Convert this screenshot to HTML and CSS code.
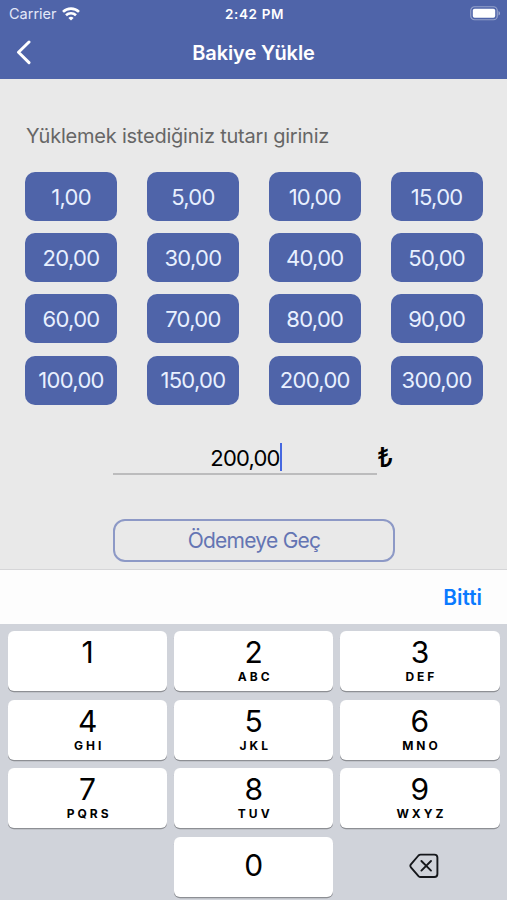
FILE: index.html
```html
<!DOCTYPE html>
<html lang="tr">
<head>
  <meta charset="UTF-8" />
  <meta name="viewport" content="width=device-width, initial-scale=1.0"/>
  <title>Bakiye Yükle</title>
  <link rel="stylesheet" href="styles.css">
</head>
<body>
  <header>
    <div class="status">
      <div class="carrier">
        <span>Carrier</span>
        <svg width="18" height="14" viewBox="0 0 18 14" fill="none" stroke="#fff" stroke-width="2.6">
          <path d="M1 4.9a11.4 11.4 0 0 1 16 0"/>
          <path d="M4 8.3a7.2 7.2 0 0 1 10 0"/>
          <path d="M9 13.6l-2.6-2.7a3.8 3.8 0 0 1 5.2 0z" fill="#fff" stroke="none"/>
        </svg>
      </div>
      <span class="time">2:42 PM</span>
      <svg class="battery" width="31" height="15" viewBox="0 0 31 15">
        <rect x="0.75" y="0.75" width="26.5" height="13" rx="3.8" fill="none" stroke="#fff" stroke-opacity="0.4" stroke-width="1.2"/>
        <rect x="2.8" y="2.8" width="22.4" height="9" rx="1.8" fill="#fff"/>
        <path d="M28.6 5v4.6c1.8-.8 1.8-3.8 0-4.6z" fill="#fff" fill-opacity="0.5"/>
      </svg>
    </div>
    <div class="navbar">
      <a class="back" href="#" aria-label="Geri">
        <svg width="16" height="26" viewBox="0 0 16 26" fill="none" stroke="#fff" stroke-width="3" stroke-linecap="round" stroke-linejoin="round">
          <path d="M13 2L2.5 12.3L13 22.6"/>
        </svg>
      </a>
      <h1>Bakiye Yükle</h1>
    </div>
  </header>

  <main>
    <p class="prompt">Yüklemek istediğiniz tutarı giriniz</p>
    <div class="amounts">
      <button>1,00</button>
      <button>5,00</button>
      <button>10,00</button>
      <button>15,00</button>
      <button>20,00</button>
      <button>30,00</button>
      <button>40,00</button>
      <button>50,00</button>
      <button>60,00</button>
      <button>70,00</button>
      <button>80,00</button>
      <button>90,00</button>
      <button>100,00</button>
      <button>150,00</button>
      <button>200,00</button>
      <button>300,00</button>
    </div>
    <div class="entry">
      <div class="field"><span>200,00</span><i class="caret"></i></div>
      <span class="currency">₺</span>
    </div>
    <button class="pay">Ödemeye Geç</button>
  </main>

  <div class="toolbar"><a href="#">Bitti</a></div>

  <div class="keypad">
    <button class="key"><b>1</b><small></small></button>
    <button class="key"><b>2</b><small>ABC</small></button>
    <button class="key"><b>3</b><small>DEF</small></button>
    <button class="key"><b>4</b><small>GHI</small></button>
    <button class="key"><b>5</b><small>JKL</small></button>
    <button class="key"><b>6</b><small>MNO</small></button>
    <button class="key"><b>7</b><small>PQRS</small></button>
    <button class="key"><b>8</b><small>TUV</small></button>
    <button class="key"><b>9</b><small>WXYZ</small></button>
    <span></span>
    <button class="key zero"><b>0</b></button>
    <button class="delete" aria-label="Sil">
      <svg width="30" height="26" viewBox="0 0 30 26" fill="none" stroke="#15171b" stroke-width="1.9" stroke-linecap="round" stroke-linejoin="round">
        <path d="M11.6 1.6H25.4Q28.4 1.6 28.4 4.6V21Q28.4 24 25.4 24H11.6Q10.4 24 9.5 23.1L1.9 14.3Q.8 12.8 1.9 11.3L9.5 2.5Q10.4 1.6 11.6 1.6Z"/>
        <path d="M12.4 8L22 17.6M22 8L12.4 17.6"/>
      </svg>
    </button>
  </div>
</body>
</html>
```
FILE: styles.css
```css
:root {
  --blue: #4f64a9;
  --page: #e9e9e9;
  --keyboard: #d0d3da;
}

* { box-sizing: border-box; }

body {
  font-family: Inter, "Liberation Sans", sans-serif;
  background: var(--page);
  color: #000;
  margin: 0;
  height: 900px;
  display: flex;
  flex-direction: column;
  overflow: hidden;
}

button {
  font-family: inherit;
  border: none;
  padding: 0;
  margin: 0;
  cursor: pointer;
}
a { text-decoration: none; }
svg { display: block; }

header {
  background: var(--blue);
  color: #fff;
  height: 79px;
}

.status {
  display: grid;
  grid-template-columns: 1fr auto 1fr;
  align-items: center;
  height: 27px;
  padding: 0 6px 0 9px;
}
.carrier {
  display: flex;
  align-items: center;
  gap: 5px;
  font-size: 14.5px;
  color: #e3e8f8;
}
.time {
  font-size: 13.5px;
  font-weight: 600;
  letter-spacing: 0.65px;
  margin-left: -1px;
}
.battery { justify-self: end; }

.navbar {
  display: grid;
  grid-template-columns: 1fr auto 1fr;
  align-items: center;
  height: 51px;
  padding: 0 16px;
}
h1 {
  margin: 0;
  font-size: 20px;
  font-weight: 600;
  letter-spacing: -0.1px;
}

main {
  height: 490px;
  padding: 43px 24px 0 25px;
}
.prompt {
  margin: 0 0 22px 1px;
  height: 28px;
  line-height: 28px;
  font-size: 20px;
  letter-spacing: -0.22px;
  color: #666;
}

.amounts {
  display: grid;
  grid-template-columns: repeat(4, 92px);
  grid-auto-rows: 49px;
  gap: 12.2px 29.9px;
}
.amounts button {
  background: var(--blue);
  color: #e8f0ff;
  border-radius: 10px;
  font-size: 22px;
  letter-spacing: -0.7px;
}

.entry {
  display: flex;
  width: 282px;
  margin: 36px auto 0 88px;
}
.field {
  display: flex;
  justify-content: center;
  width: 264px;
  height: 34px;
  padding: 2px 0 0 2px;
  border-bottom: 2px solid #bcbcbd;
  font-size: 22px;
  line-height: 30px;
  letter-spacing: -0.8px;
}
.caret {
  width: 2px;
  height: 28px;
  background: #4668e0;
}
.currency {
  font-size: 27px;
  font-weight: 500;
  line-height: 33px;
}

.pay {
  display: block;
  width: 282px;
  height: 43px;
  margin: 44px 0 0 88px;
  background: none;
  border: 2px solid #8d99c6;
  border-radius: 12px;
  color: #6475b3;
  font-size: 21px;
  letter-spacing: -0.75px;
}

.toolbar {
  display: flex;
  align-items: center;
  justify-content: flex-end;
  height: 55px;
  padding-right: 25px;
  background: #fdfdfd;
  border-top: 1px solid #d6d6d8;
}
.toolbar a {
  color: #0a7aff;
  font-size: 20.8px;
  font-weight: 600;
}

.keypad {
  flex: 1;
  display: grid;
  grid-template-columns: repeat(3, 1fr);
  grid-auto-rows: 60px;
  gap: 8.5px 7px;
  padding: 7px 7.5px 0 8px;
  background: var(--keyboard);
}
.key {
  display: flex;
  flex-direction: column;
  align-items: center;
  padding-top: 4px;
  background: #fff;
  border-radius: 6px;
  box-shadow: 0 1.3px 0 #8d8f94;
  color: #000;
}
.key b {
  font-size: 30px;
  font-weight: 400;
  line-height: 34px;
}
.key small {
  font-size: 12px;
  font-weight: 700;
  line-height: 15px;
  letter-spacing: 3px;
  margin-right: -3px;
}
.key.zero { padding-top: 11px; }
.delete {
  display: flex;
  align-items: center;
  justify-content: center;
  padding: 0 0 2px 8px;
  background: none;
}
```
